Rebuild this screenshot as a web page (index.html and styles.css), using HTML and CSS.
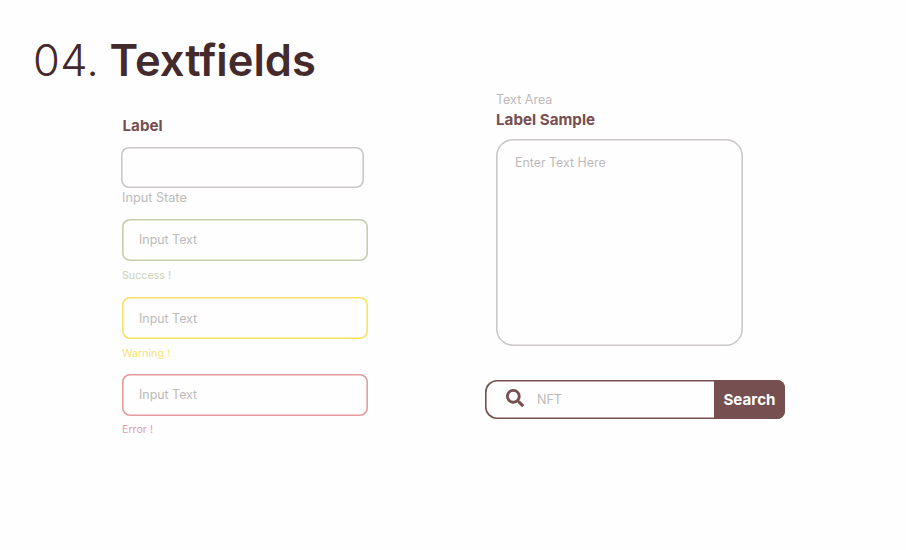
FILE: index.html
```html
<!DOCTYPE html>
<html lang="en">
<head>
<meta charset="utf-8">
<title>Textfields</title>
<link rel="stylesheet" href="styles.css">
</head>
<body>
<h1 class="title"><span class="number">04.</span> <span class="name">Textfields</span></h1>
<main class="columns">
  <section class="fields">
    <div class="label">Label</div>
    <div class="box plain"></div>
    <div class="caption state"><span>Input State</span></div>
    <div class="box success"><span>Input Text</span></div>
    <div class="caption success-text"><span>Success !</span></div>
    <div class="box warning"><span>Input Text</span></div>
    <div class="caption warning-text"><span>Warning !</span></div>
    <div class="box error"><span>Input Text</span></div>
    <div class="caption error-text"><span>Error !</span></div>
  </section>
  <section class="side">
    <div class="hint"><span>Text Area</span></div>
    <div class="label"><span>Label Sample</span></div>
    <div class="area"><span>Enter Text Here</span></div>
    <div class="search">
      <svg class="icon" viewBox="0 0 512 512" aria-hidden="true"><path d="M505 442.7 405.3 343c-4.5-4.500-10.600-7-17-7H372c27.600-35.300 44-79.700 44-128C416 93.100 322.900 0 208 0S0 93.100 0 208s93.100 208 208 208c48.300 0 92.700-16.400 128-44v16.300c0 6.400 2.500 12.500 7 17l99.700 99.700c9.400 9.400 24.600 9.400 33.900 0l28.300-28.300c9.400-9.400 9.400-24.600.100-34zM208 336c-70.700 0-128-57.200-128-128 0-70.700 57.200-128 128-128 70.700 0 128 57.200 128 128 0 70.700-57.200 128-128 128z"/></svg>
      <span class="query">NFT</span>
      <div class="button"><span>Search</span></div>
    </div>
  </section>
</main>
</body>
</html>
```
FILE: styles.css
```css
* { box-sizing: border-box; }
body {
  margin: 0;
  height: 550px;
  overflow: hidden;
  background: #fefefe;
  font-family: Inter, "Liberation Sans", sans-serif;
  color: #bdbabb;
}
.title {
  margin: 0;
  padding: 34px 0 0 33px;
  height: 90px;
  font-size: 43.500px;
  line-height: 52px;
  color: #452a2d;
  white-space: nowrap;
}
.number { font-weight: 300; letter-spacing: 0.4px; }
.name { font-weight: 600; }
.columns {
  display: grid;
  grid-template-columns: 248px 300px;
  column-gap: 116px;
  padding-left: 121px;
}
.fields { padding-top: 26px; }
.label {
  height: 20px;
  padding-left: 1.500px;
  font-size: 15.200px;
  font-weight: 700;
  line-height: 20px;
  color: #764f51;
}
.box {
  --line: #cbc6c7;
  display: flex;
  align-items: center;
  width: 246px;
  height: 42px;
  margin-left: 1px;
  padding-left: 17px;
  border-radius: 8px;
  box-shadow: inset 0 0 0 1.600px var(--line);
  font-size: 12.400px;
}
.plain { width: 242.500px; height: 41px; margin: 11px 0 0; }
.success { --line: #c5cead; }
.warning { --line: #f6e363; }
.error { --line: #e59a9c; }
.caption {
  height: 36.500px;
  padding: 7px 0 0 1px;
  font-size: 10.700px;
  line-height: 16px;
}
.state { height: 30.500px; padding-top: 2px; font-size: 12.700px; }
.success-text { color: #c9d3b8; }
.warning-text { height: 34.500px; color: #f8e671; }
.error-text { padding-top: 6px; color: #dfa0b0; }
.side .hint { padding: 0 0 0 11px; height: 20px; font-size: 12.500px; line-height: 19px; }
.side .label { padding-left: 11px; }
.area {
  width: 246.500px;
  height: 206.500px;
  margin: 9px 0 0 11px;
  padding: 15px 19px;
  border-radius: 17px;
  box-shadow: inset 0 0 0 1.600px #cbc6c7;
  font-size: 12.400px;
  line-height: 18px;
}
.search {
  display: flex;
  align-items: center;
  width: 300px;
  height: 39px;
  margin-top: 34.500px;
  padding-left: 21px;
  border-radius: 12px 8px 8px 12px;
  box-shadow: inset 0 0 0 1.600px #764f51;
  font-size: 12.500px;
}
.icon { width: 18px; height: 18px; margin-top: -3px; fill: #764f51; }
.query { flex: 1; padding-left: 13px; }
.button {
  display: flex;
  align-items: center;
  justify-content: center;
  width: 71px;
  height: 100%;
  border-radius: 0 8px 8px 0;
  background: #764f51;
  color: #fff;
  font-size: 15.200px;
  font-weight: 700;
}
```
